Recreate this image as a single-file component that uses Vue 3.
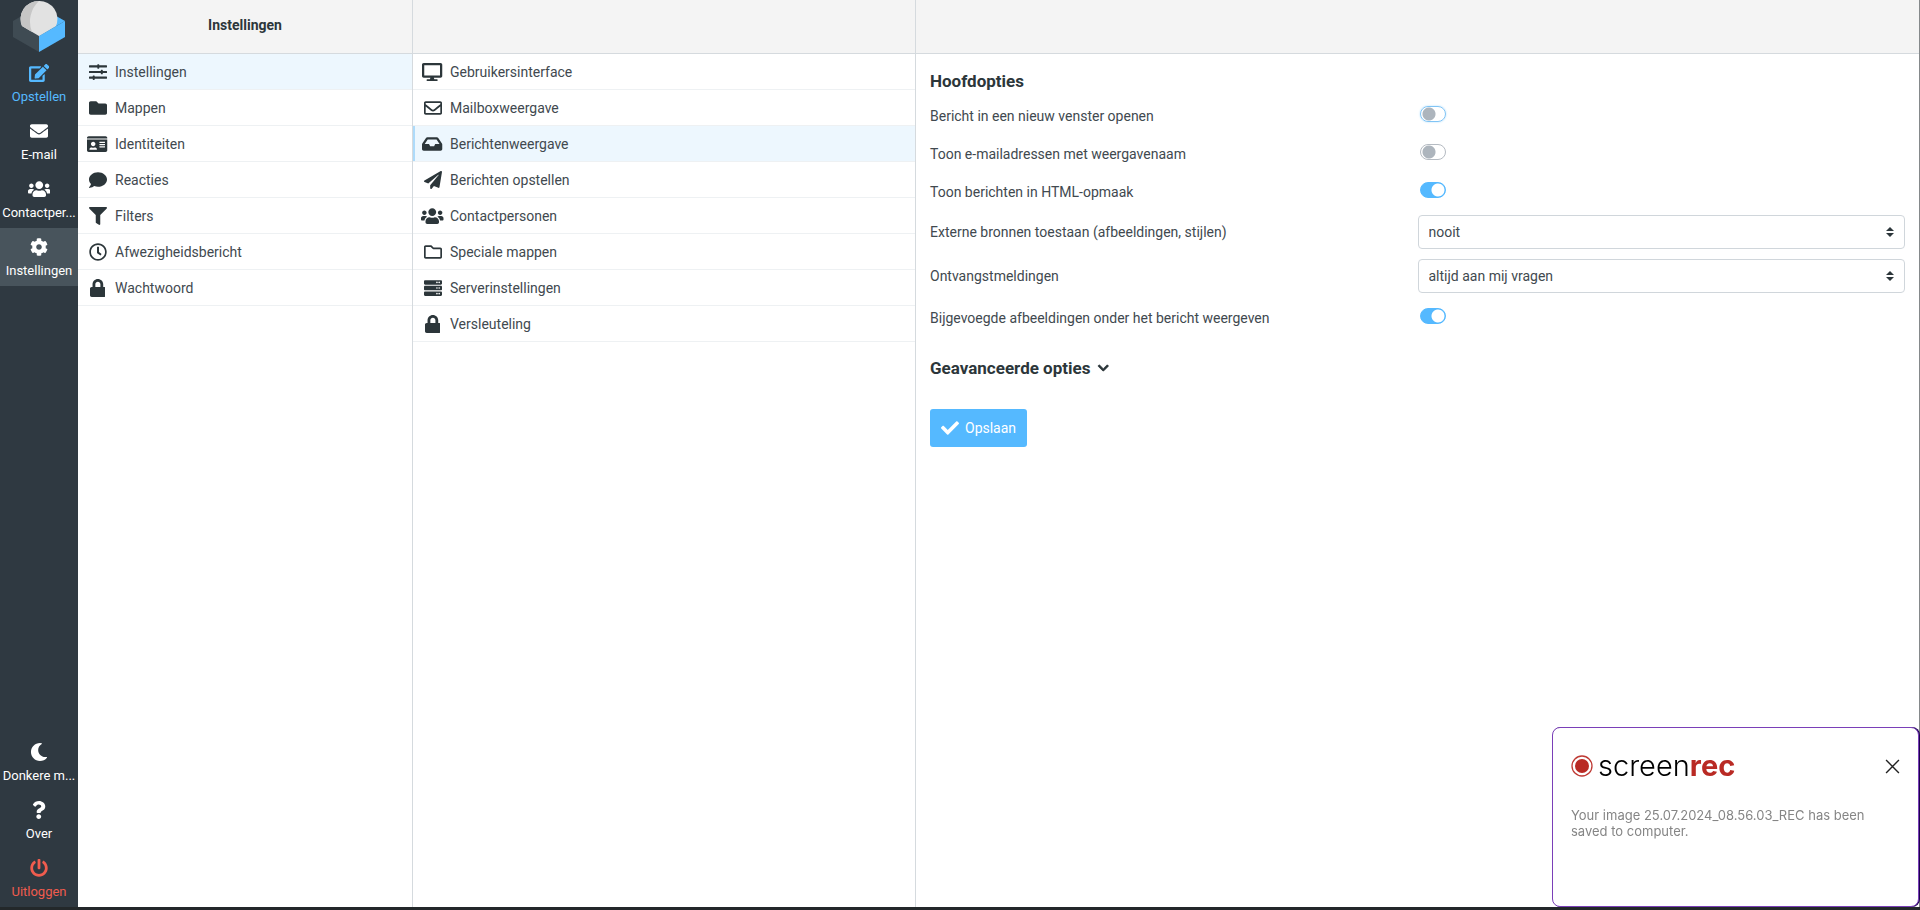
<script setup>
import { ref } from 'vue'

const icons = {
  edit: [576, 'M402.6 83.2l90.2 90.2c3.8 3.8 3.8 10 0 13.8L274.4 405.6l-92.8 10.3c-12.4 1.4-22.9-9.1-21.5-21.5l10.3-92.8L388.8 83.2c3.8-3.8 10-3.8 13.8 0zm162-22.9l-48.8-48.8c-15.2-15.2-39.9-15.2-55.2 0l-35.4 35.4c-3.8 3.8-3.8 10 0 13.8l90.2 90.2c3.8 3.8 10 3.8 13.8 0l35.4-35.4c15.2-15.3 15.2-40 0-55.2zM384 346.2V448H64V128h229.8c3.2 0 6.2-1.3 8.5-3.5l40-40c7.6-7.6 2.2-20.5-8.5-20.5H48C21.5 64 0 85.5 0 112v352c0 26.5 21.5 48 48 48h352c26.5 0 48-21.5 48-48V306.2c0-10.7-12.9-16-20.5-8.5l-40 40c-2.2 2.3-3.5 5.3-3.5 8.5z'],
  mail: [512, 'M502.3 190.8c3.9-3.1 9.7-.2 9.7 4.7V400c0 26.5-21.5 48-48 48H48c-26.5 0-48-21.5-48-48V195.6c0-5 5.7-7.8 9.7-4.7 22.4 17.4 52.1 39.5 154.1 113.6 21.1 15.4 56.7 47.8 92.2 47.6 35.7.3 72-32.8 92.3-47.6 102-74.1 131.6-96.3 154-113.7zM256 320c23.2.4 56.6-29.2 73.4-41.4 132.7-96.3 142.8-104.7 173.4-128.7 5.8-4.5 9.2-11.5 9.2-18.9v-19c0-26.5-21.5-48-48-48H48c-26.5 0-48 21.5-48 48v19c0 7.4 3.4 14.3 9.2 18.9 30.6 23.9 40.7 32.4 173.4 128.7 16.8 12.2 50.2 41.8 73.4 41.4z'],
  users: [640, 'M96 224c35.3 0 64-28.7 64-64s-28.7-64-64-64-64 28.7-64 64 28.7 64 64 64zm448 0c35.3 0 64-28.7 64-64s-28.7-64-64-64-64 28.7-64 64 28.7 64 64 64zm32 32h-64c-17.6 0-33.5 7.1-45.1 18.6 40.3 22.1 68.9 62 75.1 109.4h66c17.7 0 32-14.3 32-32v-32c0-35.3-28.7-64-64-64zm-256 0c61.9 0 112-50.1 112-112S381.9 32 320 32 208 82.1 208 144s50.1 112 112 112zm76.8 32h-8.3c-20.8 10-43.9 16-68.5 16s-47.6-6-68.5-16h-8.3C179.6 288 128 339.6 128 403.2V432c0 26.5 21.5 48 48 48h288c26.5 0 48-21.5 48-48v-28.8c0-63.6-51.6-115.2-115.2-115.2zm-223.7-13.4C161.5 263.1 145.6 256 128 256H64c-35.3 0-64 28.7-64 64v32c0 17.7 14.3 32 32 32h65.9c6.3-47.4 34.9-87.3 75.2-109.4z'],
  cog: [512, 'M487.4 315.7l-42.6-24.6c4.3-23.2 4.3-47 0-70.2l42.6-24.6c4.9-2.8 7.1-8.6 5.5-14-11.1-35.6-30-67.8-54.7-94.6-3.8-4.1-10-5.1-14.8-2.3L380.8 110c-17.9-15.4-38.5-27.3-60.8-35.1V25.8c0-5.6-3.9-10.5-9.4-11.7-36.7-8.2-74.3-7.8-109.2 0-5.5 1.2-9.4 6.1-9.4 11.7V75c-22.2 7.9-42.8 19.8-60.8 35.1L88.7 85.5c-4.9-2.8-11-1.9-14.8 2.3-24.7 26.7-43.6 58.9-54.7 94.6-1.7 5.4.6 11.2 5.5 14L67.3 221c-4.3 23.2-4.3 47 0 70.2l-42.6 24.6c-4.9 2.8-7.1 8.6-5.5 14 11.1 35.6 30 67.8 54.7 94.6 3.8 4.1 10 5.1 14.8 2.3l42.6-24.6c17.9 15.4 38.5 27.3 60.8 35.1v49.2c0 5.6 3.9 10.5 9.4 11.7 36.7 8.2 74.3 7.8 109.2 0 5.5-1.2 9.4-6.1 9.4-11.7v-49.2c22.2-7.9 42.8-19.8 60.8-35.1l42.6 24.6c4.9 2.8 11 1.9 14.8-2.3 24.7-26.7 43.6-58.9 54.7-94.6 1.5-5.5-.7-11.3-5.6-14.1zM256 336c-44.1 0-80-35.9-80-80s35.9-80 80-80 80 35.9 80 80-35.9 80-80 80z'],
  moon: [512, 'M283.211 512c78.962 0 151.079-35.925 198.857-94.792 7.068-8.708-.639-21.43-11.562-19.35-124.203 23.654-238.262-71.576-238.262-196.954 0-72.222 38.662-138.635 101.498-174.394 9.686-5.512 7.25-20.197-3.756-22.23A258.156 258.156 0 0 0 283.211 0c-141.309 0-256 114.511-256 256 0 141.309 114.511 256 256 256z'],
  question: [384, 'M202.021 0C122.202 0 70.503 32.703 29.914 91.026c-7.363 10.58-5.093 25.086 5.178 32.874l43.138 32.709c10.373 7.865 25.132 6.026 33.253-4.148 25.049-31.381 43.63-49.449 82.757-49.449 30.764 0 68.816 19.799 68.816 49.631 0 22.552-18.617 34.134-48.993 51.164-35.423 19.86-82.299 44.576-82.299 106.405V320c0 13.255 10.745 24 24 24h72.471c13.255 0 24-10.745 24-24v-5.773c0-42.86 125.268-44.645 125.268-160.627C377.504 66.256 286.902 0 202.021 0zM192 373.459c-38.196 0-69.271 31.075-69.271 69.271 0 38.195 31.075 69.27 69.271 69.27s69.271-31.075 69.271-69.271-31.075-69.27-69.271-69.27z'],
  power: [512, 'M400 54.1c63 45 104 118.6 104 201.9 0 136.8-110.8 247.7-247.5 248C120 504.3 8.2 393 8 256.4 7.9 173.1 48.9 99.3 111.8 54.2c11.7-8.3 28-4.8 35 7.7L162.6 90c5.9 10.5 3.1 23.8-6.6 31-41.5 30.8-68 79.6-68 134.9-.1 92.3 74.5 168.1 168 168.1 91.6 0 168.6-74.2 168-169.1-.3-51.8-24.7-101.8-68.1-134-9.7-7.2-12.4-20.5-6.5-30.9l15.8-28.1c7-12.4 23.2-16.1 34.8-7.8zM296 264V24c0-13.3-10.7-24-24-24h-32c-13.3 0-24 10.7-24 24v240c0 13.3 10.7 24 24 24h32c13.3 0 24-10.7 24-24z'],
  sliders: [512, 'M12 66h224V48a16 16 0 0 1 16-16h24a16 16 0 0 1 16 16v18h208a12 12 0 0 1 12 12v36a12 12 0 0 1-12 12H292v18a16 16 0 0 1-16 16h-24a16 16 0 0 1-16-16v-18H12a12 12 0 0 1-12-12V78a12 12 0 0 1 12-12zM12 226h324v-18a16 16 0 0 1 16-16h24a16 16 0 0 1 16 16v18h108a12 12 0 0 1 12 12v36a12 12 0 0 1-12 12H392v18a16 16 0 0 1-16 16h-24a16 16 0 0 1-16-16v-18H12a12 12 0 0 1-12-12v-36a12 12 0 0 1 12-12zM12 386h94v-18a16 16 0 0 1 16-16h24a16 16 0 0 1 16 16v18h338a12 12 0 0 1 12 12v36a12 12 0 0 1-12 12H162v18a16 16 0 0 1-16 16h-24a16 16 0 0 1-16-16v-18H12a12 12 0 0 1-12-12v-36a12 12 0 0 1 12-12z'],
  folder: [512, 'M464 128H272l-64-64H48C21.49 64 0 85.49 0 112v288c0 26.51 21.49 48 48 48h416c26.51 0 48-21.49 48-48V176c0-26.51-21.49-48-48-48z'],
  idcard: [576, 'M528 32H48C21.5 32 0 53.5 0 80v16h576V80c0-26.5-21.5-48-48-48zM0 432c0 26.5 21.5 48 48 48h480c26.5 0 48-21.5 48-48V128H0v304zm352-232c0-4.4 3.6-8 8-8h144c4.4 0 8 3.6 8 8v16c0 4.4-3.6 8-8 8H360c-4.4 0-8-3.6-8-8v-16zm0 64c0-4.4 3.6-8 8-8h144c4.4 0 8 3.6 8 8v16c0 4.4-3.6 8-8 8H360c-4.4 0-8-3.6-8-8v-16zm0 64c0-4.4 3.6-8 8-8h144c4.4 0 8 3.6 8 8v16c0 4.4-3.6 8-8 8H360c-4.4 0-8-3.6-8-8v-16zM176 192c35.3 0 64 28.7 64 64s-28.7 64-64 64-64-28.7-64-64 28.7-64 64-64zM67.1 396.2C75.5 370.5 99.6 352 128 352h8.2c12.3 5.1 25.7 8 39.8 8s27.6-2.9 39.8-8h8.2c28.4 0 52.5 18.5 60.9 44.2 3.2 9.9-5.2 19.8-15.6 19.8H82.7c-10.4 0-18.8-10-15.6-19.8z'],
  comment: [512, 'M256 32C114.6 32 0 125.1 0 240c0 49.6 21.4 95 57 130.7C44.5 421.1 2.7 466 2.2 466.5c-2.2 2.3-2.8 5.7-1.5 8.7S4.8 480 8 480c66.3 0 116-31.8 140.6-51.4 32.7 12.3 69 19.4 107.4 19.4 141.4 0 256-93.1 256-208S397.4 32 256 32z'],
  filter: [512, 'M487.976 0H24.028C2.71 0-8.047 25.866 7.058 40.971L192 225.941V432c0 7.831 3.821 15.17 10.237 19.662l80 55.98C298.02 518.69 320 507.493 320 487.98V225.941l184.947-184.97C520.021 25.896 509.338 0 487.976 0z'],
  clock: [512, 'M256 8C119 8 8 119 8 256s111 248 248 248 248-111 248-248S393 8 256 8zm0 448c-110.5 0-200-89.5-200-200S145.5 56 256 56s200 89.5 200 200-89.5 200-200 200zm61.8-104.4l-84.9-61.7c-3.1-2.3-4.9-5.9-4.9-9.7V116c0-6.6 5.4-12 12-12h32c6.6 0 12 5.4 12 12v141.7l66.8 48.6c5.4 3.9 6.5 11.4 2.6 16.8L334.6 349c-3.9 5.3-11.4 6.5-16.8 2.6z'],
  lock: [448, 'M400 224h-24v-72C376 68.2 307.8 0 224 0S72 68.2 72 152v72H48c-26.5 0-48 21.5-48 48v192c0 26.5 21.5 48 48 48h352c26.5 0 48-21.5 48-48V272c0-26.5-21.5-48-48-48zm-104 0H152v-72c0-39.7 32.3-72 72-72s72 32.3 72 72v72z'],
  desktop: [576, 'M528 0H48C21.5 0 0 21.5 0 48v320c0 26.5 21.5 48 48 48h192l-16 48h-72c-13.3 0-24 10.7-24 24s10.7 24 24 24h272c13.3 0 24-10.7 24-24s-10.7-24-24-24h-72l-16-48h192c26.5 0 48-21.5 48-48V48c0-26.5-21.5-48-48-48zm-16 352H64V64h448v288z'],
  envelope: [512, 'M464 64H48C21.49 64 0 85.49 0 112v288c0 26.51 21.49 48 48 48h416c26.51 0 48-21.49 48-48V112c0-26.51-21.49-48-48-48zm0 48v40.805c-22.422 18.259-58.168 46.651-134.587 106.49-16.841 13.247-50.201 45.072-73.413 44.701-23.208.375-56.579-31.459-73.413-44.701C106.18 199.465 70.425 171.067 48 152.805V112h416zM48 400V214.398c22.914 18.251 55.409 43.862 104.938 82.646 21.857 17.205 60.134 55.186 103.062 54.955 42.717.231 80.509-37.199 103.053-54.947 49.528-38.783 82.032-64.401 104.947-82.653V400H48z'],
  inbox: [576, 'M567.938 243.908L462.25 85.374A48.003 48.003 0 0 0 422.311 64H153.689a48 48 0 0 0-39.938 21.374L8.062 243.908A47.994 47.994 0 0 0 0 270.533V400c0 26.51 21.49 48 48 48h480c26.51 0 48-21.49 48-48V270.533a47.994 47.994 0 0 0-8.062-26.625zM162.252 128h251.497l85.333 128H376l-32 64H232l-32-64H76.918l85.334-128z'],
  plane: [512, 'M476 3.2L12.5 270.6c-18.1 10.4-15.8 35.6 2.2 43.2L121 358.4l287.3-253.2c5.5-4.9 13.3 2.6 8.6 8.3L176 407v80.5c0 23.6 28.5 32.9 42.5 15.8L282 426l124.6 52.2c14.2 6 30.4-2.9 33-18.2l72-432C515 7.8 493.3-6.8 476 3.2z'],
  folderOpen: [512, 'M464 128H272l-54.63-54.63c-6-6-14.14-9.37-22.63-9.37H48C21.49 64 0 85.49 0 112v288c0 26.51 21.49 48 48 48h416c26.51 0 48-21.49 48-48V176c0-26.51-21.49-48-48-48zm0 272H48V112h140.12l54.63 54.63c6 6 14.14 9.37 22.63 9.37H464v224z'],
  server: [512, 'M480 160H32c-17.673 0-32-14.327-32-32V64c0-17.673 14.327-32 32-32h448c17.673 0 32 14.327 32 32v64c0 17.673-14.327 32-32 32zm-48-88c-13.255 0-24 10.745-24 24s10.745 24 24 24 24-10.745 24-24-10.745-24-24-24zm-64 0c-13.255 0-24 10.745-24 24s10.745 24 24 24 24-10.745 24-24-10.745-24-24-24zm112 248H32c-17.673 0-32-14.327-32-32v-64c0-17.673 14.327-32 32-32h448c17.673 0 32 14.327 32 32v64c0 17.673-14.327 32-32 32zm-48-88c-13.255 0-24 10.745-24 24s10.745 24 24 24 24-10.745 24-24-10.745-24-24-24zm-64 0c-13.255 0-24 10.745-24 24s10.745 24 24 24 24-10.745 24-24-10.745-24-24-24zm112 248H32c-17.673 0-32-14.327-32-32v-64c0-17.673 14.327-32 32-32h448c17.673 0 32 14.327 32 32v64c0 17.673-14.327 32-32 32zm-48-88c-13.255 0-24 10.745-24 24s10.745 24 24 24 24-10.745 24-24-10.745-24-24-24zm-64 0c-13.255 0-24 10.745-24 24s10.745 24 24 24 24-10.745 24-24-10.745-24-24-24z'],
  check: [512, 'M173.898 439.404l-166.4-166.4c-9.997-9.997-9.997-26.206 0-36.204l36.203-36.204c9.997-9.998 26.207-9.998 36.204 0L192 312.69 432.095 72.596c9.997-9.997 26.207-9.997 36.204 0l36.203 36.204c9.997 9.997 9.997 26.206 0 36.204l-294.4 294.401c-9.998 9.997-26.207 9.997-36.204-.001z'],
  chevron: [448, 'M207.029 381.476L12.686 187.132c-9.373-9.373-9.373-24.569 0-33.941l22.667-22.667c9.357-9.357 24.522-9.375 33.901-.04L224 284.505l154.745-154.021c9.379-9.335 24.544-9.317 33.901.04l22.667 22.667c9.373 9.373 9.373 24.569 0 33.941L240.971 381.476c-9.373 9.372-24.569 9.372-33.942 0z'],
}
const box = (name) => `0 0 ${icons[name][0]} 512`

const topMenu = [
  { icon: 'edit', label: 'Opstellen', kind: 'compose' },
  { icon: 'mail', label: 'E-mail' },
  { icon: 'users', label: 'Contactper...' },
  { icon: 'cog', label: 'Instellingen', kind: 'selected' },
]
const bottomMenu = [
  { icon: 'moon', label: 'Donkere m...' },
  { icon: 'question', label: 'Over' },
  { icon: 'power', label: 'Uitloggen', kind: 'logout' },
]
const settings = [
  { icon: 'sliders', label: 'Instellingen', selected: true },
  { icon: 'folder', label: 'Mappen' },
  { icon: 'idcard', label: 'Identiteiten' },
  { icon: 'comment', label: 'Reacties' },
  { icon: 'filter', label: 'Filters' },
  { icon: 'clock', label: 'Afwezigheidsbericht' },
  { icon: 'lock', label: 'Wachtwoord' },
]
const sections = [
  { icon: 'desktop', label: 'Gebruikersinterface' },
  { icon: 'envelope', label: 'Mailboxweergave' },
  { icon: 'inbox', label: 'Berichtenweergave', selected: true },
  { icon: 'plane', label: 'Berichten opstellen' },
  { icon: 'users', label: 'Contactpersonen' },
  { icon: 'folderOpen', label: 'Speciale mappen' },
  { icon: 'server', label: 'Serverinstellingen' },
  { icon: 'lock', label: 'Versleuteling' },
]
const options = ref([
  { id: 'new-window', label: 'Bericht in een nieuw venster openen', value: false, active: true },
  { id: 'show-address', label: 'Toon e-mailadressen met weergavenaam', value: false },
  { id: 'show-html', label: 'Toon berichten in HTML-opmaak', value: true },
  { id: 'remote', label: 'Externe bronnen toestaan (afbeeldingen, stijlen)', value: 'nooit', choices: ['nooit', 'altijd'] },
  { id: 'receipts', label: 'Ontvangstmeldingen', value: 'altijd aan mij vragen', choices: ['altijd aan mij vragen', 'negeren'] },
  { id: 'inline-images', label: 'Bijgevoegde afbeeldingen onder het bericht weergeven', value: true },
])
const toastOpen = ref(true)
</script>

<template>
  <div class="app">
    <div class="shell">
      <nav class="taskbar">
        <div class="logo">
          <svg viewBox="0 0 52 52" aria-hidden="true">
            <path d="M0 21 26 6 52 21V37L26 52 0 37z" fill="#3f4b53" />
            <path d="M26 36 52 21V37L26 52z" fill="#55b9ff" />
            <path d="M43 16 52 21 26 36V25z" fill="#55b9ff" />
            <path d="M26 1A18 18 0 0 0 9 26L26 36 43 26A18 18 0 0 0 26 1z" fill="#e2e2e2" />
            <path d="M26 1A18 18 0 0 0 9 26L19 32A28 28 0 0 1 26 1z" fill="#c6c6c6" />
          </svg>
        </div>
        <a v-for="m in topMenu" :key="m.label" href="#" class="task" :class="m.kind">
          <svg class="icon" :viewBox="box(m.icon)" aria-hidden="true"><path :d="icons[m.icon][1]" /></svg>
          <span>{{ m.label }}</span>
        </a>
        <div class="spacer"></div>
        <a v-for="m in bottomMenu" :key="m.label" href="#" class="task" :class="m.kind">
          <svg class="icon" :viewBox="box(m.icon)" aria-hidden="true"><path :d="icons[m.icon][1]" /></svg>
          <span>{{ m.label }}</span>
        </a>
      </nav>

      <section class="column menu">
        <header class="bar">Instellingen</header>
        <a v-for="s in settings" :key="s.label" href="#" class="row" :class="{ selected: s.selected }">
          <span class="slot"><svg class="icon" :viewBox="box(s.icon)" aria-hidden="true"><path :d="icons[s.icon][1]" /></svg></span>
          {{ s.label }}
        </a>
      </section>

      <section class="column sections">
        <header class="bar"></header>
        <a v-for="s in sections" :key="s.label" href="#" class="row" :class="{ selected: s.selected, marked: s.selected }">
          <span class="slot"><svg class="icon" :viewBox="box(s.icon)" aria-hidden="true"><path :d="icons[s.icon][1]" /></svg></span>
          {{ s.label }}
        </a>
      </section>

      <main class="column content">
        <header class="bar"></header>
        <form class="form" @submit.prevent>
          <h2>Hoofdopties</h2>
          <div class="fields">
            <div v-for="o in options" :key="o.id" class="field" :class="{ toggle: !o.choices }">
              <label :for="o.id">{{ o.label }}</label>
              <div v-if="o.choices" class="select">
                <select :id="o.id" v-model="o.value">
                  <option v-for="c in o.choices" :key="c">{{ c }}</option>
                </select>
                <svg viewBox="0 0 8 10" aria-hidden="true"><path d="M4 0 8 4H0zM4 10 0 6H8z" /></svg>
              </div>
              <input v-else :id="o.id" v-model="o.value" type="checkbox" class="switch" :class="{ active: o.active }" />
            </div>
          </div>
          <h2 class="advanced">
            <button type="button">
              Geavanceerde opties
              <svg class="icon" :viewBox="box('chevron')" aria-hidden="true"><path :d="icons.chevron[1]" /></svg>
            </button>
          </h2>
          <button type="submit" class="save">
            <svg class="icon" :viewBox="box('check')" aria-hidden="true"><path :d="icons.check[1]" /></svg>
            Opslaan
          </button>
        </form>
      </main>
    </div>
    <div class="edge"></div>

    <aside v-if="toastOpen" class="toast">
      <div class="toast-head">
        <svg class="rec" viewBox="0 0 22 22" aria-hidden="true">
          <circle cx="11" cy="11" r="10" fill="none" stroke="#bf3a34" stroke-width="1.3" />
          <circle cx="11" cy="11" r="7" fill="#b92a24" />
        </svg>
        <span class="brand">screen<b>rec</b></span>
        <button type="button" aria-label="Close" @click="toastOpen = false">
          <svg viewBox="0 0 14 14" aria-hidden="true"><path d="M1 1 13 13M13 1 1 13" /></svg>
        </button>
      </div>
      <p>Your image 25.07.2024_08.56.03_REC has been saved to computer.</p>
    </aside>
  </div>
</template>

<style>
body {
  margin: 0;
}
</style>

<style scoped>
.app {
  display: flex;
  flex-direction: column;
  min-height: 100vh;
  font-family: Roboto, "Liberation Sans", sans-serif;
  font-size: 14px;
  line-height: 20px;
  color: #41494f;
  background: #fff;
}
.app *,
.app {
  box-sizing: border-box;
}
a {
  color: inherit;
  text-decoration: none;
}
.icon {
  display: block;
  fill: currentColor;
}
.shell {
  flex: 1;
  display: flex;
  border-right: 1px solid #85898b;
}
.edge {
  height: 3px;
  background: #23282a;
}

.taskbar {
  flex: none;
  width: 78px;
  display: flex;
  flex-direction: column;
  background: #2f3941;
  color: #fff;
}
.logo {
  height: 54px;
  display: flex;
  justify-content: center;
}
.logo svg {
  width: 52px;
  height: 52px;
}
.task {
  height: 58px;
  padding-top: 10px;
  display: flex;
  flex-direction: column;
  align-items: center;
  gap: 5px;
  font-size: 13px;
  white-space: nowrap;
}
.task .icon {
  height: 18px;
}
.compose {
  color: #55b9ff;
}
.task.selected {
  background: #48545c;
}
.logout {
  color: #f05c4e;
}
.spacer {
  flex: 1;
}

.column {
  border-right: 1px solid #d5dade;
}
.menu {
  flex: 0 0 335px;
}
.sections {
  flex: 0 0 503px;
}
.content {
  flex: 1;
  border-right: 0;
}
.bar {
  height: 54px;
  display: flex;
  align-items: center;
  justify-content: center;
  padding-bottom: 4px;
  border-bottom: 1px solid #d5dade;
  background: #f4f4f4;
  color: #2c363a;
  font-weight: 700;
}
.row {
  height: 36px;
  display: flex;
  align-items: center;
  gap: 6px;
  padding-left: 8px;
  border-bottom: 1px solid #eef1f3;
}
.row.selected {
  background: #edf7fe;
}
.row.marked {
  box-shadow: inset 2px 0 #aedbfa;
}
.slot {
  width: 23px;
  display: flex;
  justify-content: center;
  color: #2c363a;
}
.slot .icon {
  height: 18px;
}

.form {
  padding: 16px 14px;
}
h2 {
  margin: 0;
  font-size: 17px;
  line-height: 22px;
  font-weight: 700;
  color: #2c363a;
}
.fields {
  display: grid;
  gap: 10px;
  margin: 9px 0 26px;
}
.field {
  display: grid;
  grid-template-columns: 1fr 1fr;
  align-items: center;
  min-height: 28px;
}
.toggle label {
  padding-top: 2px;
}
.select {
  position: relative;
}
select {
  display: block;
  width: 100%;
  height: 34px;
  padding: 0 10px;
  appearance: none;
  border: 1px solid #d0d6db;
  border-radius: 4px;
  background: #fff;
  color: inherit;
  font: inherit;
}
.select svg {
  position: absolute;
  top: 12px;
  right: 11px;
  width: 8px;
  height: 10px;
  fill: #2c363a;
  pointer-events: none;
}
.switch {
  appearance: none;
  width: 26px;
  height: 16px;
  margin: 0 2px 2px;
  border: 1px solid #b5bbc2;
  border-radius: 8px;
  background: radial-gradient(circle at 8px 7px, #adb5bd 6px, #fff 7px);
}
.switch.active {
  border-color: #80c4f5;
  box-shadow: 0 0 2px #a9dbff;
}
.switch:checked {
  border-color: #55b9ff;
  background: radial-gradient(circle at 17px 7px, #fff 6px, #55b9ff 7px);
}
.advanced button {
  display: flex;
  align-items: center;
  gap: 8px;
  padding: 0;
  border: 0;
  background: none;
  color: inherit;
  font: inherit;
}
.advanced .icon {
  height: 12px;
  overflow: visible;
  stroke: currentColor;
  stroke-width: 30;
}
.save {
  display: flex;
  align-items: center;
  gap: 6px;
  height: 38px;
  margin-top: 30px;
  padding: 0 11px;
  border: 0;
  border-radius: 3px;
  background: #55b9ff;
  color: #fff;
  font: inherit;
}
.save .icon {
  height: 18px;
}

.toast {
  position: fixed;
  right: 1px;
  bottom: 3px;
  width: 367px;
  min-height: 180px;
  padding: 20px 18px;
  border: 1px solid #7a3fb8;
  border-radius: 8px;
  background: #fff;
  box-shadow: 1px 0 #1c0050;
  font-family: Inter, "Liberation Sans", sans-serif;
  font-size: 13px;
  line-height: 16px;
  color: #858585;
}
.toast-head {
  display: flex;
  align-items: center;
  gap: 5px;
}
.rec {
  width: 22px;
  height: 22px;
}
.brand {
  font-size: 29px;
  line-height: 36px;
  font-weight: 300;
  color: #000;
}
.brand b {
  font-weight: 700;
  color: #b92a24;
}
.toast-head button {
  margin-left: auto;
  padding: 0;
  border: 0;
  background: none;
}
.toast-head svg {
  display: block;
}
.toast-head button svg {
  width: 15px;
  height: 15px;
  fill: none;
  stroke: #222;
  stroke-width: 1.3;
}
.toast p {
  width: 300px;
  margin: 23px 0 0;
}
</style>
